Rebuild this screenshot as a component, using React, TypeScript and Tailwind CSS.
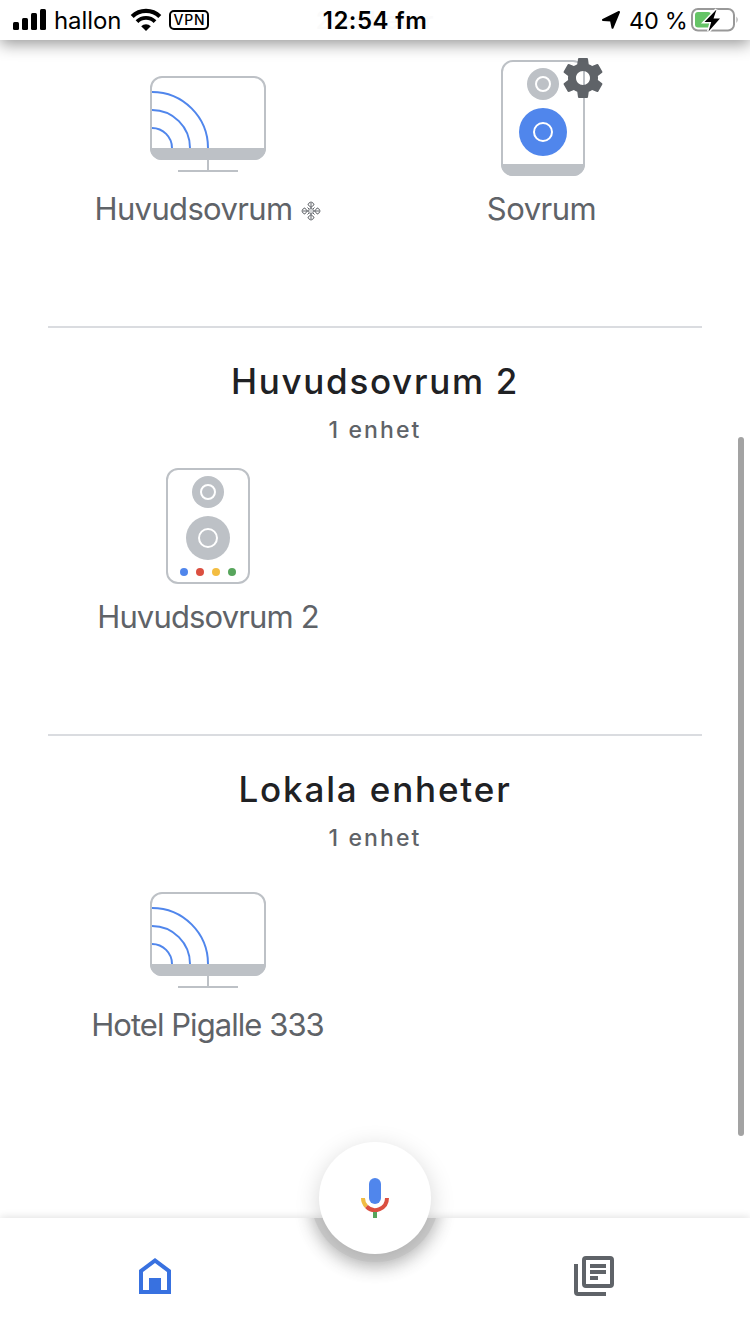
import type { ReactNode } from "react";

function CastScreen() {
  return (
    <svg width="116" height="116" viewBox="0 0 116 116" fill="none" aria-hidden="true">
      <rect x="1" y="17" width="114" height="82" rx="11" stroke="#bdc1c6" strokeWidth="2" />
      <path d="M0 88h116a12 12 0 0 1-12 12H12A12 12 0 0 1 0 88z" fill="#bdc1c6" />
      <path d="M58 100v11M28 111h60" stroke="#bdc1c6" strokeWidth="2" />
      <path
        d="M2 68a20 20 0 0 1 20 20M2 50a38 38 0 0 1 38 38M2 32a56 56 0 0 1 56 56"
        stroke="#5086ec"
        strokeWidth="2"
      />
    </svg>
  );
}

function StereoSpeaker() {
  return (
    <svg width="84" height="116" viewBox="0 0 84 116" fill="none" aria-hidden="true">
      <rect x="1" y="1" width="82" height="114" rx="11" stroke="#bdc1c6" strokeWidth="2" />
      <path d="M0 104h84a12 12 0 0 1-12 12H12A12 12 0 0 1 0 104z" fill="#bdc1c6" />
      <circle cx="42" cy="24" r="16" fill="#bdc1c6" />
      <circle cx="42" cy="24" r="7" stroke="#fff" strokeWidth="2" />
      <circle cx="42" cy="72" r="24" fill="#5086ec" />
      <circle cx="42" cy="72" r="9" stroke="#fff" strokeWidth="2" />
    </svg>
  );
}

function AssistantSpeaker() {
  return (
    <svg width="84" height="116" viewBox="0 0 84 116" fill="none" aria-hidden="true">
      <rect x="1" y="1" width="82" height="114" rx="11" stroke="#bdc1c6" strokeWidth="2" />
      <circle cx="42" cy="24" r="16" fill="#bdc1c6" />
      <circle cx="42" cy="24" r="7" stroke="#fff" strokeWidth="2" />
      <circle cx="42" cy="70" r="22" fill="#bdc1c6" />
      <circle cx="42" cy="70" r="9" stroke="#fff" strokeWidth="2" />
      <circle cx="18" cy="104" r="4" fill="#5086ec" />
      <circle cx="34" cy="104" r="4" fill="#db4f40" />
      <circle cx="50" cy="104" r="4" fill="#f3bd42" />
      <circle cx="66" cy="104" r="4" fill="#57a55c" />
    </svg>
  );
}

function Gear() {
  return (
    <svg width="48" height="48" viewBox="0 0 24 24" fill="#5f6368" aria-hidden="true">
      <path d="M19.43 12.98c.04-.32.07-.64.07-.98s-.03-.66-.07-.98l2.11-1.65c.19-.15.24-.42.12-.64l-2-3.46c-.12-.22-.39-.3-.61-.22l-2.49 1c-.52-.4-1.08-.73-1.69-.98l-.38-2.65C14.46 2.18 14.25 2 14 2h-4c-.25 0-.46.18-.49.42l-.38 2.65c-.61.25-1.17.59-1.69.98l-2.49-1c-.23-.09-.49 0-.61.22l-2 3.46c-.13.22-.07.49.12.64l2.11 1.65c-.04.32-.07.65-.07.98s.03.66.07.98l-2.11 1.65c-.19.15-.24.42-.12.64l2 3.46c.12.22.39.3.61.22l2.49-1c.52.4 1.08.73 1.69.98l.38 2.65c.03.24.24.42.49.42h4c.25 0 .46-.18.49-.42l.38-2.65c.61-.25 1.17-.59 1.69-.98l2.49 1c.23.09.49 0 .61-.22l2-3.46c.12-.22.07-.49-.12-.64l-2.11-1.65zM12 15.5c-1.93 0-3.500-1.570-3.500-3.500s1.570-3.500 3.500-3.500 3.500 1.570 3.500 3.500-1.570 3.500-3.500 3.500z" />
    </svg>
  );
}

function Flake() {
  return (
    <svg width="20" height="20" viewBox="0 0 20 20" fill="none" stroke="#5f6368" aria-hidden="true">
      <path d="M10 2v16M2 10h16M6.500 6.500l7 7M13.500 6.500l-7 7" strokeWidth="1" />
      <path
        d="M6.800 3.600 10 6.400l3.200-2.800M6.800 16.400 10 13.600l3.200 2.800M3.600 6.800 6.400 10l-2.800 3.200M16.400 6.800 13.600 10l2.800 3.200"
        strokeWidth="1"
      />
      <path
        d="M7 3.800Q8 1 10 1t3 2.800M7 16.200Q8 19 10 19t3-2.800M3.800 7Q1 8 1 10t2.800 3M16.200 7Q19 8 19 10t-2.800 3"
        strokeWidth="1"
      />
      <circle cx="10" cy="10" r="2.600" fill="#d5d7d9" strokeWidth="0.600" />
    </svg>
  );
}

function Device({ icon, children }: { icon: ReactNode; children: ReactNode }) {
  return (
    <div className="flex flex-col items-center">
      <div className="relative flex h-[116px] justify-center">{icon}</div>
      <div className="mt-[13px] flex h-10 items-center whitespace-nowrap text-[31px] leading-10 text-[#5f6368]">
        {children}
      </div>
    </div>
  );
}

function Room({ title, titleClass, children }: { title: string; titleClass: string; children: ReactNode }) {
  return (
    <section className="mx-12 h-[408px] border-t-2 border-[#dadce0]">
      <h2 className={"pt-[29px] text-center text-[35px] font-medium leading-[48px] text-[#202124] " + titleClass}>
        {title}
      </h2>
      <p className="mt-[9px] text-center text-[23px] font-medium leading-8 tracking-[2.100px] text-[#5f6368]">1 enhet</p>
      <div className="-mx-2 mt-[22px] grid grid-cols-[336px_334px]">{children}</div>
    </section>
  );
}

function StatusBar() {
  return (
    <header className="relative z-10 flex h-10 shrink-0 items-center bg-white font-['Inter','Liberation_Sans',sans-serif] text-black shadow-[0_4px_16px_rgba(0,0,0,0.42)]">
      <div className="flex w-[300px] items-center pl-[13px]">
        <svg width="34" height="22" viewBox="0 0 34 22" aria-hidden="true">
          <rect x="0" y="13" width="6" height="8" rx="1.500" />
          <rect x="9" y="9" width="6" height="12" rx="1.500" />
          <rect x="18" y="4" width="6" height="17" rx="1.500" />
          <rect x="27" y="0" width="6" height="21" rx="1.500" />
        </svg>
        <span className="ml-[7px] w-[67px] whitespace-nowrap pt-[2px] text-2xl tracking-[-0.100px]">hallon</span>
        <svg className="ml-[9px]" width="32" height="24" viewBox="0 0 32 24" fill="none" stroke="#000" aria-hidden="true">
          <path d="M2.200 8.600A19.500 19.500 0 0 1 29.800 8.600" strokeWidth="4.200" />
          <path d="M7 13.600A12.700 12.700 0 0 1 25 13.600" strokeWidth="3.800" />
          <path d="M16 23l-4.800-4.800a6.800 6.800 0 0 1 9.600 0z" fill="#000" stroke="none" />
        </svg>
        <span className="ml-[7px] flex h-5 w-10 items-center justify-center rounded-[5px] border-2 border-black pl-px text-[14px] font-medium leading-none tracking-[0.900px]">
          VPN
        </span>
      </div>
      <div className="relative flex w-[150px] justify-center whitespace-nowrap pt-[2px] text-2xl font-semibold">
        <span className="absolute font-medium tracking-[1px] text-[#fafafa]" aria-hidden="true">
          2 enheter
        </span>
        <span className="relative tracking-[0.450px]">12:54 fm</span>
      </div>
      <div className="flex flex-1 items-center justify-end pr-[11px]">
        <svg width="20" height="20" viewBox="0 0 20 20" aria-hidden="true">
          <path
            d="M18 2 11.500 17.800 10 10.500 2 10z"
            stroke="#000"
            strokeWidth="2"
            strokeLinejoin="round"
          />
        </svg>
        <span className="ml-[8px] w-[58px] whitespace-nowrap pt-[2px] text-[23.500px] tracking-[-0.300px]">40 %</span>
        <svg className="ml-[3px]" width="49" height="28" viewBox="0 0 49 28" fill="none" aria-hidden="true">
          <rect x="2" y="3" width="42" height="21.500" rx="6" stroke="#999" strokeWidth="2" />
          <path d="M46.500 10.500q2.200 3 0 6.500z" fill="#999" />
          <rect x="5" y="6" width="16" height="15.500" rx="3" fill="#65c466" />
          <path
            d="M26.500 3.500 14.500 16h6.700L18.500 25.500 30 12.500h-6.500z"
            fill="#000"
            stroke="#fff"
            strokeWidth="3"
            paintOrder="stroke"
          />
        </svg>
      </div>
    </header>
  );
}

function NavBar() {
  return (
    <nav className="relative flex h-[116px] shrink-0 items-center justify-between bg-white pl-[139px] pr-[136px] shadow-[0_-1px_8px_rgba(0,0,0,0.12)]">
      <svg width="32" height="36" viewBox="0 0 32 36" aria-hidden="true">
        <path fillRule="evenodd" fill="#3871e0" d="M16 0 32 12v24H0V12zM16 5 4 14v18h6V20h12v12h6V14z" />
      </svg>
      <svg width="40" height="40" viewBox="0 0 40 40" fill="none" stroke="#5f6368" strokeWidth="4" aria-hidden="true">
        <rect x="10" y="2" width="28" height="28" rx="2" />
        <path d="M16 10h16M16 16h16M16 22h8" />
        <path d="M2 8v28q0 2 2 2h28" />
      </svg>
      <div className="absolute left-[311px] top-[-84px] size-32 rounded-full bg-[#d0d0d0] shadow-[0_4px_18px_rgba(0,0,0,0.24)] [clip-path:inset(84px_-40px_-40px_-40px)]" />
      <button
        aria-label="Assistant"
        className="absolute left-[319px] top-[-76px] flex size-28 items-center justify-center rounded-full bg-white shadow-[0_6px_24px_rgba(0,0,0,0.17)]"
      >
        <svg width="32" height="40" viewBox="0 0 32 40" fill="none" strokeWidth="4" aria-hidden="true">
          <rect x="10" y="0" width="12" height="26" rx="6" fill="#5086ec" />
          <path d="M4 20a12 12 0 0 0 3.500 8.500" stroke="#f0bc42" />
          <path d="M7.500 28.500A12 12 0 0 0 28 20" stroke="#db4f40" />
          <path d="M16 34v6" stroke="#57a55c" />
        </svg>
      </button>
    </nav>
  );
}

export default function App() {
  return (
    <div className="flex h-[1334px] w-[750px] flex-col overflow-hidden bg-white font-['Inter','Liberation_Sans',sans-serif]">
      <StatusBar />
      <main className="relative h-[1178px] shrink-0">
        <div className="mx-10 grid h-[286px] grid-cols-[336px_334px] pt-5">
          <Device icon={<CastScreen />}>
            <span className="tracking-[-0.650px]">Huvudsovrum</span>
            <span className="ml-[9px] mt-[4px]">
              <Flake />
            </span>
          </Device>
          <Device
            icon={
              <>
                <StereoSpeaker />
                <span className="absolute left-[58px] top-[-6px]">
                  <Gear />
                </span>
              </>
            }
          >
            <span className="-ml-[3px] tracking-[-0.500px]">Sovrum</span>
          </Device>
        </div>
        <Room title="Huvudsovrum 2" titleClass="tracking-[1.700px]">
          <Device icon={<AssistantSpeaker />}>
            <span className="tracking-[-0.850px]">Huvudsovrum 2</span>
          </Device>
        </Room>
        <Room title="Lokala enheter" titleClass="tracking-[1.850px]">
          <Device icon={<CastScreen />}>
            <span className="-ml-px tracking-[-0.950px]">Hotel Pigalle 333</span>
          </Device>
        </Room>
        <div className="absolute right-[6px] top-[397px] h-[699px] w-[6px] rounded-full bg-[#a3a3a3]" />
      </main>
      <NavBar />
    </div>
  );
}
